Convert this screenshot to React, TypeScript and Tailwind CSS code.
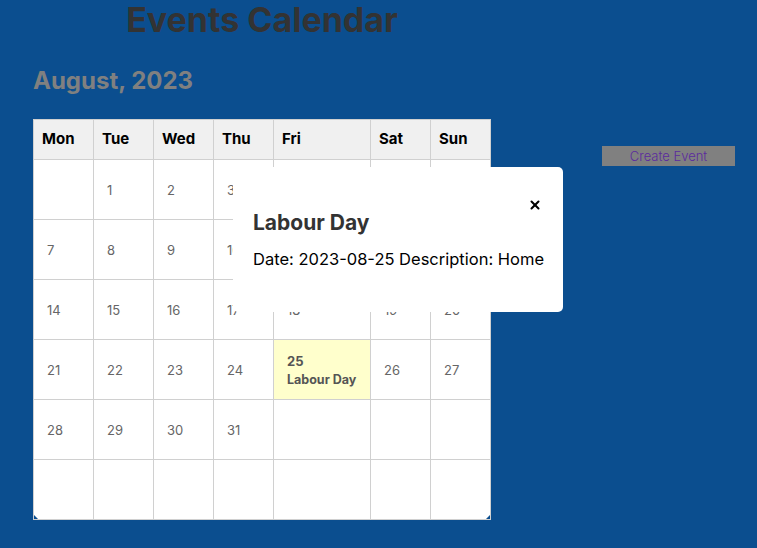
import { X } from 'lucide-react'

const days = ['Mon', 'Tue', 'Wed', 'Thu', 'Fri', 'Sat', 'Sun']

// August 2023 starts on a Tuesday
const weeks: (number | null)[][] = [
  [null, 1, 2, 3, 4, 5, 6],
  [7, 8, 9, 10, 11, 12, 13],
  [14, 15, 16, 17, 18, 19, 20],
  [21, 22, 23, 24, 25, 26, 27],
  [28, 29, 30, 31, null, null, null],
  [null, null, null, null, null, null, null],
]

const events: Record<number, string> = { 25: 'Labour Day' }

export default function App() {
  return (
    <div
      className="relative min-h-[548px] w-full bg-[#0b4e8f] text-[#333]"
      style={{ fontFamily: 'Inter, "Liberation Sans", sans-serif' }}
    >
      <div className="flex">
        <div className="ml-[33px] w-[458px]">
          <h1 className="text-center text-[34px] font-bold leading-[40px] text-[#333]">Events Calendar</h1>
          <h2 className="mt-[26px] text-[24px] font-bold leading-[30px] text-[#808080]">August, 2023</h2>

          <div className="relative mt-[23px] grid grid-cols-[59px_59px_59px_59px_96px_59px_59px] gap-px border border-[#d0d0d0] bg-[#d0d0d0]">
            {days.map((d) => (
              <div key={d} className="flex h-[39px] items-center bg-[#f0f0f0] pl-[8px] text-[15px] font-bold text-black">
                {d}
              </div>
            ))}
            {weeks.flat().map((n, i) => {
              const ev = n ? events[n] : undefined
              return (
                <div
                  key={i}
                  className={`flex h-[59px] flex-col justify-center pl-[13px] text-[13px] ${ev ? 'bg-[#ffffcc] font-bold text-[#555]' : 'bg-white text-[#666]'}`}
                >
                  {n && <span className="leading-[18px]">{n}</span>}
                  {ev && <span className="mt-[2px] text-[12.5px] leading-[16px]">{ev}</span>}
                </div>
              )
            })}
            <span className="absolute bottom-0 left-0 h-0 w-0 border-b-[4px] border-r-[4px] border-b-[#0b4e8f] border-r-transparent" />
            <span className="absolute bottom-0 right-0 h-0 w-0 border-b-[4px] border-l-[4px] border-b-[#0b4e8f] border-l-transparent" />
          </div>
        </div>

        <button className="ml-[111px] mt-[146px] h-[20px] w-[133px] bg-[#808080] text-[13px] font-light leading-[20px] text-[#5b2a9e]">
          Create Event
        </button>
      </div>

      <div className="absolute left-[233px] top-[167px] h-[145px] w-[330px] rounded-[5px] bg-white">
        <button className="absolute right-[21px] top-[31px] text-black">
          <X size={14} strokeWidth={3.5} />
        </button>
        <div className="pl-[20px] pt-[42px]">
          <h3 className="text-[21px] font-bold leading-[28px] text-[#333]">Labour Day</h3>
          <p className="mt-[10px] text-[16.5px] leading-[24px] text-black">Date: 2023-08-25 Description: Home</p>
        </div>
      </div>
    </div>
  )
}
